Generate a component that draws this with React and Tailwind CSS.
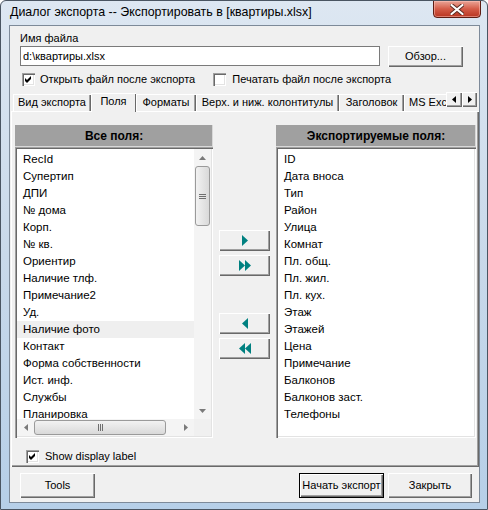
import React from "react";

const allFields = [
  "RecId",
  "Супертип",
  "ДПИ",
  "№ дома",
  "Корп.",
  "№ кв.",
  "Ориентир",
  "Наличие тлф.",
  "Примечание2",
  "Уд.",
  "Наличие фото",
  "Контакт",
  "Форма собственности",
  "Ист. инф.",
  "Службы",
  "Планировка",
  "Материал",
];

const exportFields = [
  "ID",
  "Дата вноса",
  "Тип",
  "Район",
  "Улица",
  "Комнат",
  "Пл. общ.",
  "Пл. жил.",
  "Пл. кух.",
  "Этаж",
  "Этажей",
  "Цена",
  "Примечание",
  "Балконов",
  "Балконов заст.",
  "Телефоны",
];

function Button({ className = "", children }) {
  return (
    <div
      className={`flex items-center justify-center whitespace-nowrap bg-[#f0f0f0] shadow-[inset_1px_1px_0_#ffffff,inset_-1px_-1px_0_#696969,inset_-2px_-2px_0_#a0a0a0] ${className}`}
    >
      {children}
    </div>
  );
}

function CheckBox({ checked }) {
  return (
    <span className="relative block w-[13px] h-[13px] shrink-0 bg-white shadow-[inset_1px_1px_0_#a0a0a0,inset_2px_2px_0_#696969,inset_-1px_-1px_0_#ffffff,inset_-2px_-2px_0_#e3e3e3]">
      {checked && (
        <svg className="absolute left-[3px] top-[3px]" width="7" height="7" viewBox="0 0 7 7">
          <path d="M0 2 L2 4 L6 0 L6 3 L2 7 L0 5 Z" fill="#000" />
        </svg>
      )}
    </span>
  );
}

function Tri({ dir = "right" }) {
  return (
    <svg width="6" height="11" viewBox="0 0 6 11">
      {dir === "right" ? (
        <path d="M0 0 L6 5.5 L0 11 Z" fill="#008080" />
      ) : (
        <path d="M6 0 L0 5.5 L6 11 Z" fill="#008080" />
      )}
    </svg>
  );
}

function SmallArrow({ dir }) {
  const paths = {
    up: "M0 4 L3.5 0 L7 4 Z",
    down: "M0 0 L7 0 L3.5 4 Z",
    left: "M4 0 L4 7 L0 3.5 Z",
    right: "M0 0 L4 3.5 L0 7 Z",
  };
  const vertical = dir === "up" || dir === "down";
  return (
    <svg width={vertical ? 7 : 4} height={vertical ? 4 : 7} viewBox={vertical ? "0 0 7 4" : "0 0 4 7"}>
      <path d={paths[dir]} fill="#7a7a7a" />
    </svg>
  );
}

function ListHeader({ children }) {
  return (
    <div className="h-[22px] flex items-center justify-center bg-[#a0a0a0] shadow-[inset_-1px_-1px_0_#d8d8d8] font-bold text-[12px] text-black">
      {children}
    </div>
  );
}

function Row({ text, selected }) {
  return (
    <div
      className={`h-[17px] leading-[17px] pl-[6px] whitespace-nowrap text-[11.5px] ${selected ? "bg-[#efefef]" : ""}`}
    >
      {text}
    </div>
  );
}

function SunkenBox({ className = "", children }) {
  return (
    <div
      className={`bg-white p-[2px] shadow-[inset_1px_1px_0_#a0a0a0,inset_2px_2px_0_#696969,inset_-1px_-1px_0_#ffffff,inset_-2px_-2px_0_#e3e3e3] ${className}`}
    >
      {children}
    </div>
  );
}

function VScroll() {
  return (
    <div className="w-[17px] h-full flex flex-col bg-[#f4f4f4]">
      <div className="h-[17px] flex items-center justify-center">
        <SmallArrow dir="up" />
      </div>
      <div className="h-[60px] mx-[1px] rounded-[3px] border border-[#9a9a9a] bg-gradient-to-r from-[#f2f2f2] to-[#d9d9d9] flex items-center justify-center">
        <div className="w-[7px] flex flex-col gap-[1px]">
          <div className="h-[1px] bg-[#6f6f6f]" />
          <div className="h-[1px] bg-[#6f6f6f]" />
          <div className="h-[1px] bg-[#6f6f6f]" />
        </div>
      </div>
      <div className="flex-1" />
      <div className="h-[17px] flex items-center justify-center">
        <SmallArrow dir="down" />
      </div>
    </div>
  );
}

function HScroll() {
  return (
    <div className="h-[17px] flex-1 flex bg-[#f4f4f4]">
      <div className="w-[17px] flex items-center justify-center">
        <SmallArrow dir="left" />
      </div>
      <div className="w-[132px] my-[1px] rounded-[3px] border border-[#9a9a9a] bg-gradient-to-b from-[#f2f2f2] to-[#d9d9d9] flex items-center justify-center">
        <div className="h-[7px] flex gap-[1px]">
          <div className="w-[1px] bg-[#6f6f6f]" />
          <div className="w-[1px] bg-[#6f6f6f]" />
          <div className="w-[1px] bg-[#6f6f6f]" />
        </div>
      </div>
      <div className="flex-1" />
      <div className="w-[17px] flex items-center justify-center">
        <SmallArrow dir="right" />
      </div>
    </div>
  );
}

function Tab({ label, width, active }) {
  if (active) {
    return (
      <div
        className={`relative z-10 h-[19px] -mb-[1px] bg-[#f0f0f0] flex items-center justify-center shadow-[inset_1px_1px_0_#ffffff,inset_-1px_0_0_#696969] ${width}`}
      >
        <span className="-mt-[2px]">{label}</span>
      </div>
    );
  }
  return (
    <div
      className={`h-[17px] bg-[#f0f0f0] flex items-center justify-center overflow-hidden whitespace-nowrap shadow-[inset_1px_1px_0_#ffffff,inset_-1px_0_0_#696969,inset_-2px_0_0_#a0a0a0] ${width}`}
    >
      {label}
    </div>
  );
}

export default function App() {
  return (
    <div className="w-[488px] h-[510px] flex flex-col overflow-hidden rounded-t-[6px] border border-[#4a5562] bg-gradient-to-b from-[#dde7f2] via-[#c9d9ea] to-[#b6cfe8] font-['Liberation_Sans',Arial,sans-serif] text-[11px] text-black">
      {/* title bar */}
      <div className="h-[24px] flex shrink-0">
        <div className="pl-[9px] pt-[4px] text-[12.4px] leading-[15px] text-black whitespace-nowrap">
          Диалог экспорта -- Экспортировать в [квартиры.xlsx]
        </div>
        <div className="ml-auto mr-[6px] -mt-[1px] w-[48px] h-[18px] rounded-b-[4px] border border-[#5e1d14] bg-gradient-to-b from-[#e9a497] via-[#d45b47] to-[#b83420] shadow-[inset_0_0_0_1px_rgba(255,200,190,0.5)] flex items-center justify-center">
          <svg width="14" height="11" viewBox="0 0 14 11">
            <path
              d="M1.5 1 L12.5 10 M12.5 1 L1.5 10"
              stroke="#5a2a22"
              strokeWidth="4"
              strokeLinecap="round"
            />
            <path
              d="M1.5 1 L12.5 10 M12.5 1 L1.5 10"
              stroke="#ffffff"
              strokeWidth="2.2"
              strokeLinecap="round"
            />
          </svg>
        </div>
      </div>

      {/* client area */}
      <div className="ml-[8px] w-[471px] h-[478px] shrink-0 border border-[#7d8a99] bg-[#f0f0f0] flex flex-col">
        <div className="mt-[5px] pl-[10px] h-[14px] leading-[14px]">Имя файла</div>

        <div className="mt-[1px] pl-[10px] flex items-start h-[21px]">
          <div className="w-[360px] h-[20px] bg-white border border-[#7a7a7a] flex items-center pl-[2px]">
            d:\квартиры.xlsx
          </div>
          <Button className="ml-[8px] w-[75px] h-[21px]">Обзор...</Button>
        </div>

        <div className="mt-[5px] h-[14px] flex items-center">
          <div className="ml-[12px] flex items-center gap-[5px]">
            <CheckBox checked />
            <span>Открыть файл после экспорта</span>
          </div>
          <div className="ml-[18px] flex items-center gap-[6px]">
            <CheckBox />
            <span>Печатать файл после экспорта</span>
          </div>
        </div>

        {/* tab strip */}
        <div className="mt-[6px] h-[19px] flex items-end pl-[3px]">
          <Tab label="Вид экспорта" width="w-[78px]" />
          <Tab label="Поля" width="w-[45px]" active />
          <Tab label="Форматы" width="w-[60px]" />
          <Tab label="Верх. и ниж. колонтитулы" width="w-[143px]" />
          <Tab label="Заголовок" width="w-[65px]" />
          <div className="relative h-[17px] w-[42px] bg-[#f0f0f0] pl-[5px] flex items-center overflow-hidden whitespace-nowrap shadow-[inset_1px_1px_0_#ffffff]">
            MS Excel
          </div>
          <div className="self-start flex">
            <Button className="w-[16px] h-[15px]">
              <svg width="4" height="7" viewBox="0 0 4 7">
                <path d="M4 0 L4 7 L0 3.5 Z" fill="#000" />
              </svg>
            </Button>
            <Button className="w-[15px] h-[15px]">
              <svg width="4" height="7" viewBox="0 0 4 7">
                <path d="M0 0 L4 3.5 L0 7 Z" fill="#000" />
              </svg>
            </Button>
          </div>
        </div>

        {/* tab page */}
        <div className="ml-[1px] w-[468px] h-[356px] bg-[#f0f0f0] shadow-[inset_1px_1px_0_#ffffff,inset_-1px_-1px_0_#696969,inset_-2px_-2px_0_#a0a0a0] pt-[14px] pl-[4px] flex flex-col">
          <div className="flex items-start">
            {/* available fields */}
            <div className="w-[198px] flex flex-col">
              <ListHeader>Все поля:</ListHeader>
              <SunkenBox className="h-[291px] flex flex-col">
                <div className="flex-1 flex min-h-0">
                  <div className="flex-1 overflow-hidden pt-[2px]">
                    {allFields.map((f, i) => (
                      <Row key={f} text={f} selected={i === 10} />
                    ))}
                  </div>
                  <VScroll />
                </div>
                <div className="flex">
                  <HScroll />
                  <div className="w-[17px] h-[17px] bg-[#f0f0f0]" />
                </div>
              </SunkenBox>
            </div>

            {/* move buttons */}
            <div className="ml-[6px] w-[51px] pt-[105px] flex flex-col">
              <Button className="h-[21px]">
                <Tri dir="right" />
              </Button>
              <Button className="mt-[4px] h-[21px]">
                <div className="flex">
                  <Tri dir="right" />
                  <Tri dir="right" />
                </div>
              </Button>
              <Button className="mt-[37px] h-[21px]">
                <Tri dir="left" />
              </Button>
              <Button className="mt-[4px] h-[21px]">
                <div className="flex">
                  <Tri dir="left" />
                  <Tri dir="left" />
                </div>
              </Button>
            </div>

            {/* exported fields */}
            <div className="ml-[6px] w-[200px] flex flex-col">
              <ListHeader>Экспортируемые поля:</ListHeader>
              <SunkenBox className="h-[291px] overflow-hidden">
                <div className="pt-[2px]">
                  {exportFields.map((f) => (
                    <Row key={f} text={f} />
                  ))}
                </div>
              </SunkenBox>
            </div>
          </div>

          <div className="mt-[10px] ml-[11px] flex items-center gap-[6px]">
            <CheckBox checked />
            <span>Show display label</span>
          </div>
        </div>

        {/* dialog buttons */}
        <div className="mt-[6px] flex">
          <Button className="ml-[10px] w-[75px] h-[25px]">Tools</Button>
          <div className="ml-auto w-[85px] h-[25px] border border-black">
            <Button className="w-full h-full">Начать экспорт</Button>
          </div>
          <Button className="ml-[4px] mr-[7px] w-[84px] h-[25px]">Закрыть</Button>
        </div>
      </div>
    </div>
  );
}
